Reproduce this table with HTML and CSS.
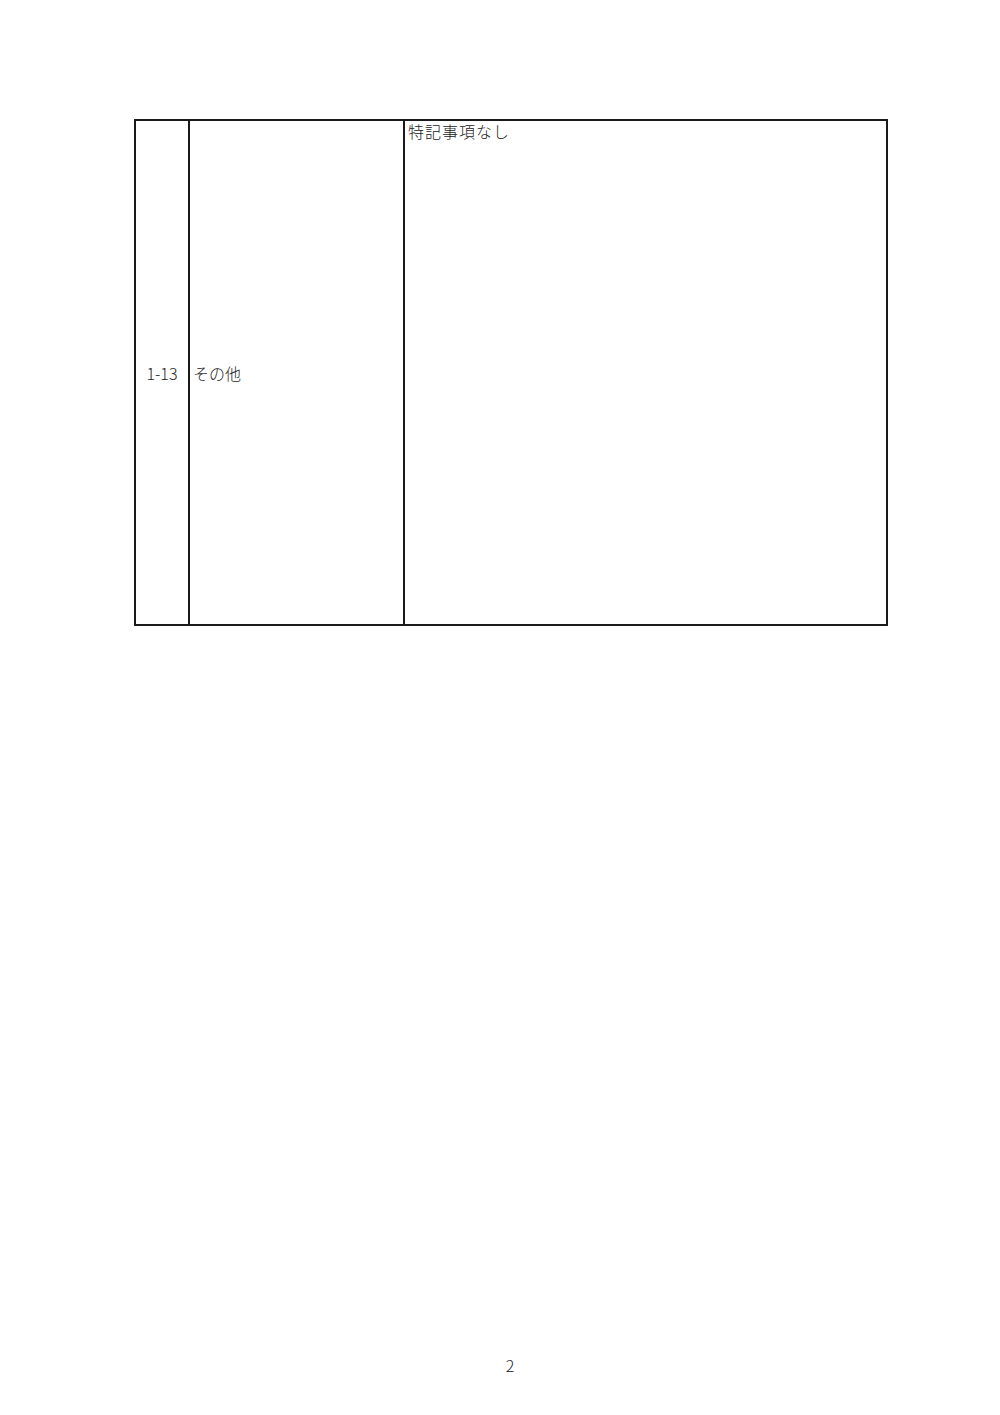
FILE: index.html
```html
<!DOCTYPE html>
<html lang="ja">
<head>
<meta charset="utf-8">
<link rel="stylesheet" href="styles.css">
</head>
<body>
<div class="page">
  <table class="sheet">
    <colgroup>
      <col class="c-no">
      <col class="c-item">
      <col class="c-body">
    </colgroup>
    <tr>
      <td class="no">1-13</td>
      <td class="item">その他</td>
      <td class="body">特記事項なし</td>
    </tr>
  </table>
  <div class="folio">2</div>
</div>
</body>
</html>
```
FILE: styles.css
```css
html, body {
  margin: 0;
  padding: 0;
  background: #fff;
}
body {
  font-family: "Noto Sans CJK JP", "Noto Sans", sans-serif;
  color: #222;
}
.page {
  width: 752px;
  padding: 119px 0 0 134px;
  display: flex;
  flex-direction: column;
}
.sheet {
  width: 752px;
  height: 507px;
  border-collapse: collapse;
  table-layout: fixed;
}
.c-no { width: 54px; }
.c-item { width: 215px; }
.c-body { width: 483px; }
.sheet td {
  border: 2px solid #1a1a1a;
  font-size: 16px;
  font-weight: 300;
  line-height: 20px;
  padding: 0 3px;
}
.no {
  text-align: center;
  vertical-align: middle;
}
.item {
  vertical-align: middle;
}
.body {
  vertical-align: top;
  letter-spacing: 1px;
  line-height: 16px;
}
.folio {
  margin-top: 729px;
  text-align: center;
  font-size: 16px;
  line-height: 20px;
  font-weight: 300;
}
```
